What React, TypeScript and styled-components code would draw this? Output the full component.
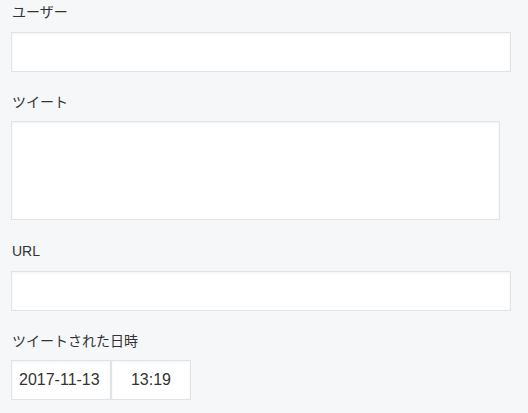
import React from "react";
import styled, { createGlobalStyle } from "styled-components";

const GlobalStyle = createGlobalStyle`
  html, body {
    margin: 0;
    padding: 0;
    background: #f6f7f9;
  }
  body {
    font-family: "Liberation Sans", "Noto Sans CJK JP", sans-serif;
    color: #333;
  }
`;

const Form = styled.form`
  padding: 2px 17px 0 11px;
`;

const Field = styled.div<{ $gap?: number }>`
  margin-bottom: ${(p) => (p.$gap ?? 20)}px;
`;

const Label = styled.label`
  display: block;
  font-size: 14px;
  line-height: 20px;
  margin: 0 0 9.5px 1px;
  color: #333;
`;

const boxStyle = `
  box-sizing: border-box;
  display: block;
  border: 1px solid #e1e4e6;
  background: #fff;
  box-shadow: inset 0 1px 3px rgba(0, 0, 0, 0.05);
  outline: none;
  margin: 0;
  font-family: "Liberation Sans", "Noto Sans CJK JP", sans-serif;
  color: #333;
`;

const TextInput = styled.input`
  ${boxStyle}
  width: 500px;
  height: 40px;
  padding: 0 8px;
  font-size: 14px;
`;

const TextArea = styled.textarea`
  ${boxStyle}
  width: 489px;
  height: 99px;
  padding: 8px;
  font-size: 14px;
  resize: none;
`;

const DateRow = styled.div`
  display: flex;
`;

const DateInput = styled.input<{ $width: number; $center?: boolean }>`
  ${boxStyle}
  width: ${(p) => p.$width}px;
  height: 40px;
  padding: 0 0 0 ${(p) => (p.$center ? 0 : 7)}px;
  font-size: 16px;
  text-align: ${(p) => (p.$center ? "center" : "left")};
`;

export default function App() {
  return (
    <>
      <GlobalStyle />
      <Form onSubmit={(e) => e.preventDefault()}>
        <Field>
          <Label>ユーザー</Label>
          <TextInput type="text" />
        </Field>
        <Field $gap={21}>
          <Label>ツイート</Label>
          <TextArea />
        </Field>
        <Field>
          <Label>URL</Label>
          <TextInput type="text" />
        </Field>
        <Field>
          <Label>ツイートされた日時</Label>
          <DateRow>
            <DateInput type="text" readOnly defaultValue="2017-11-13" $width={100} />
            <DateInput type="text" readOnly defaultValue="13:19" $width={80} $center />
          </DateRow>
        </Field>
      </Form>
    </>
  );
}
